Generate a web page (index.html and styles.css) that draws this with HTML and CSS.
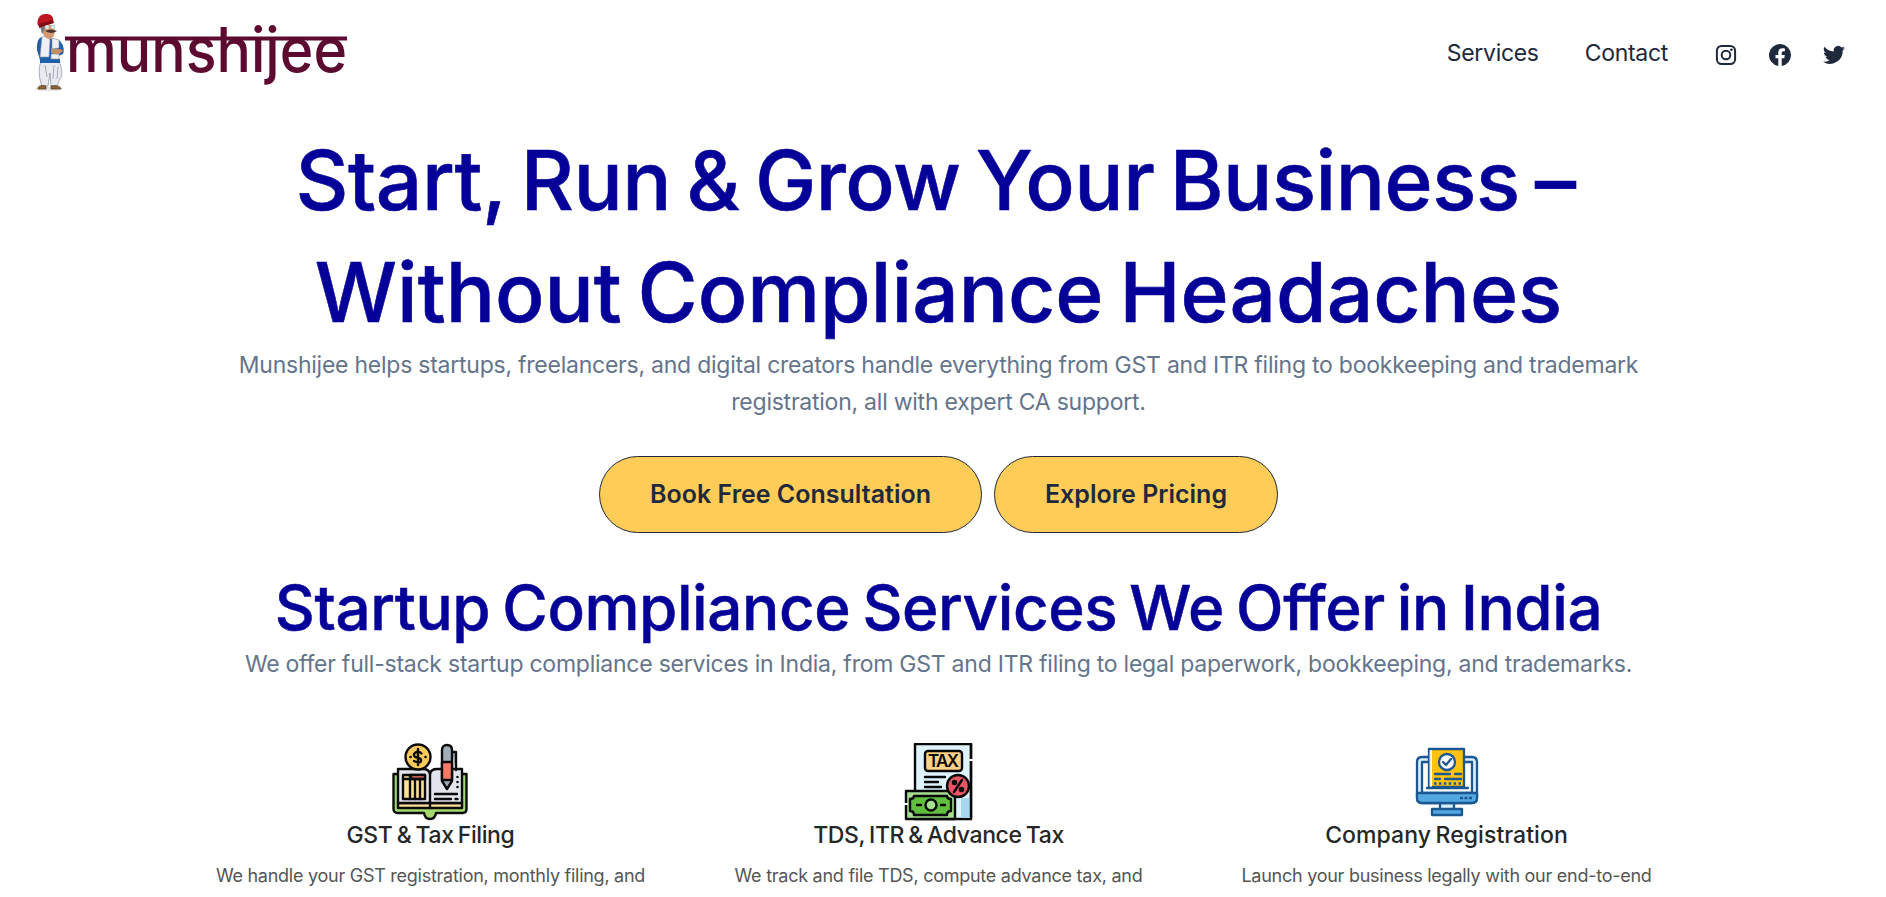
FILE: index.html
```html
<!DOCTYPE html>
<html lang="en">
<head>
<meta charset="utf-8">
<title>Munshijee</title>
<link rel="stylesheet" href="styles.css">
</head>
<body>
<header class="header">
  <a class="logo" href="#" aria-label="munshijee">
    <svg width="328" height="92" viewBox="0 0 328 92">
      <ellipse cx="21" cy="82" rx="14" ry="2" fill="#e4e4e4"/>
      <g transform="translate(1 -1)">
      <path d="M12 55h18c3 7 4 14 1 18l-3 7h-6l-1-13-2 13h-6c-3-8-4-16-1-25z" fill="#e9eaf0" stroke="#9697a3" stroke-width=".8"/>
      <path d="M16 59l2 12M25 59l-1 14M29 61l-1 12" stroke="#a9aab6" stroke-width="1" fill="none"/>
      <path d="M13 31c-5 1-5 8-5 13l3 10v3h20v-4l-6-1 9-4c2-5 0-10-4-14z" fill="#1f5fa8"/>
      <path d="M13 31l-2 20h9l1-17-3-5zM23 32l7 2v8l-7 1zM22 48h8v5h-8z" fill="#eef0f6" stroke="#8c93a8" stroke-width=".6"/>
      <path d="M22 42c4 2 9 0 12 2-2 5-7 5-12 3z" fill="#c98d63"/>
      <path d="M13 19h13l-1 11c-4 5-9 3-11-2z" fill="#d39a70"/>
      <path d="M11 20l2 8 3-5-1-4z" fill="#77777c"/>
      <path d="M9 20c-2-7 2-13 9-12 5 0 7 4 6 8-5 0-10 2-15 4z" fill="#bd1621"/>
      <path d="M10 18l14-4 1 3-15 5z" fill="#7e0c17"/>
      <circle cx="18" cy="21" r="2" fill="#c9edf4"/><circle cx="24" cy="21" r="2" fill="#c9edf4"/>
      <path d="M16 25c4-2 8-2 12 0-4 3-8 2-12 0z" fill="#48362f"/>
      <path d="M9 83c0-4 4-4 8-3v3zM22 80c6-1 9 0 10 3H22z" fill="#8a6536" stroke="#4f3821" stroke-width=".7"/>
      </g>
      <rect x="37" y="29.500" width="282" height="4" fill="#5d0a30"/>
      <text class="wordmark" x="38" y="65" textLength="281" lengthAdjust="spacingAndGlyphs">munshijee</text>
    </svg>
  </a>
  <nav class="nav">
    <a href="#">Services</a>
    <a href="#">Contact</a>
  </nav>
  <div class="social">
    <svg viewBox="0 0 24 24"><rect x="2.9" y="2.9" width="18.2" height="18.2" rx="4.8" fill="none" stroke="currentColor" stroke-width="2"/><circle cx="12" cy="12" r="4.3" fill="none" stroke="currentColor" stroke-width="2"/><circle cx="17.4" cy="6.7" r="1.3" fill="currentColor"/></svg>
    <svg viewBox="0 0 24 24"><path fill="currentColor" d="M23 12a11 11 0 1 0-12.7 10.9v-7.7H7.5V12h2.8V9.6c0-2.8 1.6-4.3 4.1-4.3 1.2 0 2.5.2 2.5.2v2.7h-1.4c-1.4 0-1.8.9-1.8 1.7V12h3.1l-.5 3.2h-2.6v7.7A11 11 0 0 0 23 12z"/></svg>
    <svg viewBox="0 0 24 24"><path fill="currentColor" d="M23 5.1c-.8.4-1.7.6-2.6.7a4.500 4.500 0 0 0 2-2.500c-.9.5-1.800.9-2.900 1.100a4.500 4.500 0 0 0-7.700 4.100A12.800 12.800 0 0 1 2.500 3.800a4.500 4.500 0 0 0 1.400 6c-.7 0-1.400-.2-2-.6v.1c0 2.200 1.500 4 3.600 4.400-.7.2-1.400.2-2 .1a4.500 4.500 0 0 0 4.200 3.100A9 9 0 0 1 1 18.800a12.800 12.800 0 0 0 19.700-11.400c.9-.6 1.700-1.400 2.300-2.300z"/></svg>
  </div>
</header>
<main class="main">
  <h1 class="title"><span class="title-a">Start, Run &amp; Grow Your Business –</span><br><span class="title-b">Without Compliance Headaches</span></h1>
  <p class="lead">Munshijee helps startups, freelancers, and digital creators handle everything from GST and ITR filing to bookkeeping and trademark registration, all with expert CA support.</p>
  <div class="buttons">
    <a class="button button-wide" href="#">Book Free Consultation</a>
    <a class="button" href="#">Explore Pricing</a>
  </div>
  <h2 class="subtitle">Startup Compliance Services We Offer in India</h2>
  <p class="lead lead-single">We offer full-stack startup compliance services in India, from GST and ITR filing to legal paperwork, bookkeeping, and trademarks.</p>
  <section class="cards">
    <article class="card">
      <svg class="card-icon" viewBox="1 0 78 78">
        <g stroke="#0b0b0b" stroke-width="2.4" stroke-linejoin="round" stroke-linecap="round">
          <path d="M2.500 31h73v35q0 4-4 4H45q-1 6-6 6t-6-6H6.500q-4 0-4-4z" fill="#a5d86e"/>
          <path d="M7 60h64v5H7z" fill="#fbdf9a"/>
          <path d="M7 26h25q6 0 7 5 1-5 7-5h25v34H7z" fill="#e3e5ec"/>
          <path d="M39 31v34" fill="none"/>
          <path d="M12 32h22v24H12z" fill="#ffe19a"/>
          <path d="M20 32h14v4H20z" fill="#fb7968"/>
          <path d="M12 36h22M19 32v24M24 36v20M29 36v20M44 51h22M44 56h16M64.500 56h2" fill="none"/>
          <circle cx="27" cy="14" r="12.500" fill="#fdca5b"/>
          <path d="M61 9h4v18" fill="#a9b0bd"/>
          <path d="M51 7q0-5 5-5t5 5v31l-5 8-5-8z" fill="#a3adb9"/>
          <path d="M51 19h10v18H51z" fill="#fb7968"/>
          <path d="M30.500 10.500q-3-3-6-1t-.5 4.500q7 1 6 4t-7 0M27 6v16" fill="none"/>
          <path d="M19.500 14h.1M34.500 14h.1M66.500 34v0M66.500 39v0M66.500 44v0" stroke-width="2.600" fill="none"/>
        </g>
      </svg>
      <h3>GST &amp; Tax Filing</h3>
      <p>We handle your GST registration, monthly filing, and</p>
    </article>
    <article class="card">
      <svg class="card-icon" viewBox="1 0 78 78">
        <g stroke="#080808" stroke-width="2.400" stroke-linejoin="round" stroke-linecap="round">
          <path d="M16 1h56v75H16z" fill="#dff3fd"/>
          <path d="M62 55h9v20h-9z" fill="#a6d7ef" stroke="none"/>
          <path d="M72 1v14M72 19v57" fill="none"/>
          <rect x="26" y="8" width="37" height="20" rx="3" fill="#ffd184"/>
          <path d="M26 34h20M26 39h13M26 44h16" fill="none"/>
          <path d="M7 48h49v28H7z" fill="#a6df90"/>
          <path d="M15 53h33q0 3 4 3v12q-4 0-4 4H15q0-4-4-4V56q4 0 4-3z" fill="#61bf40"/>
          <circle cx="32" cy="62" r="5.500" fill="#a6df90"/>
          <path d="M18 62h4M42 62h4" fill="none"/>
          <circle cx="59" cy="43" r="11" fill="#e85661"/>
          <path d="M63 37l-8 12" fill="none"/>
          <circle cx="55.500" cy="39.500" r="1.600" fill="#080808"/><circle cx="62.500" cy="46.500" r="1.600" fill="#080808"/>
        </g>
        <text class="tax" x="29" y="24" textLength="31">TAX</text>
        <path d="M5 60h4v2H5zM70.500 16h3v2h-3z" fill="#fff"/>
      </svg>
      <h3>TDS, ITR &amp; Advance Tax</h3>
      <p>We track and file TDS, compute advance tax, and</p>
    </article>
    <article class="card">
      <svg class="card-icon" viewBox="-1 0 78 78">
        <g stroke="#1b5790" stroke-width="2.300" stroke-linejoin="round" stroke-linecap="round">
          <path d="M31 58h14v9H31z" fill="#d6effd"/>
          <path d="M13 14h50q5 0 5 5v36q0 5-5 5H13q-5 0-5-5V19q0-5 5-5z" fill="#d6effd"/>
          <path d="M13 19h50v31H13z" fill="#fff"/>
          <path d="M8 50h60v5q0 5-5 5H13q-5 0-5-5z" fill="#54a8e2"/>
          <path d="M23 66h30v6H23z" fill="#54a8e2"/>
          <path d="M20 6h35v38H20z" fill="#ffc20e"/>
          <path d="M21.500 7.500h1v36h-1z" fill="#fff" stroke="#fff" stroke-width="1"/>
          <path d="M18 45h41M26 31h15M46 31h6M26 36h5M36 36h16" fill="none"/>
          <circle cx="38" cy="19" r="8" fill="#fff"/>
          <path d="M34 19l3 3 5-6" fill="none"/>
          <path d="M25 40.500h27" stroke-width="2.600" stroke-linecap="butt" stroke-dasharray="2.500 2.400" fill="none"/>
          <path d="M51 55h12" stroke-linecap="butt" stroke-dasharray="3 1.500" fill="none"/>
        </g>
      </svg>
      <h3 class="roomy">Company Registration</h3>
      <p>Launch your business legally with our end-to-end</p>
    </article>
  </section>
</main>
</body>
</html>
```
FILE: styles.css
```css
* { box-sizing: border-box; }
body { margin: 0; width: 1877px; height: 897px; overflow: hidden; background: #fff; color: #1e293b; font-family: Inter, sans-serif; }
a { color: inherit; text-decoration: none; }
h1, h2, h3, p { margin: 0; }
.header { display: flex; align-items: center; height: 106px; padding: 0 31px 0 28px; }
.logo { display: flex; margin-right: auto; }
.logo svg { overflow: visible; }
.wordmark { font: 500 62px Inter, sans-serif; fill: #5d0a30; }
.nav { display: flex; gap: 46px; font-size: 23px; letter-spacing: -.3px; line-height: 30px; }
.social { display: flex; gap: 30px; margin: 4px 0 0 46px; }
.social svg { width: 24px; height: 24px; display: block; }
.main { text-align: center; padding: 19px 176px 0; }
.title { font-size: 82px; line-height: 112px; font-weight: 500; color: #050098; white-space: nowrap; word-spacing: -6px; -webkit-text-stroke: .6px #050098; }
.title-a { letter-spacing: -.5px; margin-right: 6px; }
.title-b { letter-spacing: 0; }
.lead { padding: 0 50px; margin-top: -2px; font-size: 23px; line-height: 37px; color: #64748b; letter-spacing: -.24px; }
.buttons { display: flex; justify-content: center; gap: 12px; margin-top: 35px; }
.button { width: 284px; height: 77px; border: 1px solid #1f2937; border-radius: 39px; background: #ffcd57; font-size: 25px; font-weight: 600; line-height: 75px; }
.button-wide { width: 383px; }
.subtitle { margin-top: 33px; font-size: 62px; line-height: 84px; font-weight: 500; color: #050098; white-space: nowrap; word-spacing: -4px; letter-spacing: -.43px; font-variant-ligatures: common-ligatures; -webkit-text-stroke: .5px #050098; }
.lead-single { margin-top: -4px; padding: 0; white-space: nowrap; }
.cards { display: grid; grid-template-columns: repeat(3, 508px); justify-content: center; margin-top: 60px; }
.card { display: flex; flex-direction: column; align-items: center; }
.card-icon { width: 78px; height: 78px; }
.card h3 { margin-top: -1px; font-size: 23px; line-height: 30px; font-weight: 500; color: #262626; white-space: nowrap; word-spacing: -1.500px; letter-spacing: -.4px; }
.card .roomy { letter-spacing: .05px; }
.card p { margin-top: 11px; font-size: 18px; line-height: 30px; color: #555; white-space: nowrap; letter-spacing: -.26px; }
.tax { font: 600 17px Inter, sans-serif; fill: #080808; }
```
